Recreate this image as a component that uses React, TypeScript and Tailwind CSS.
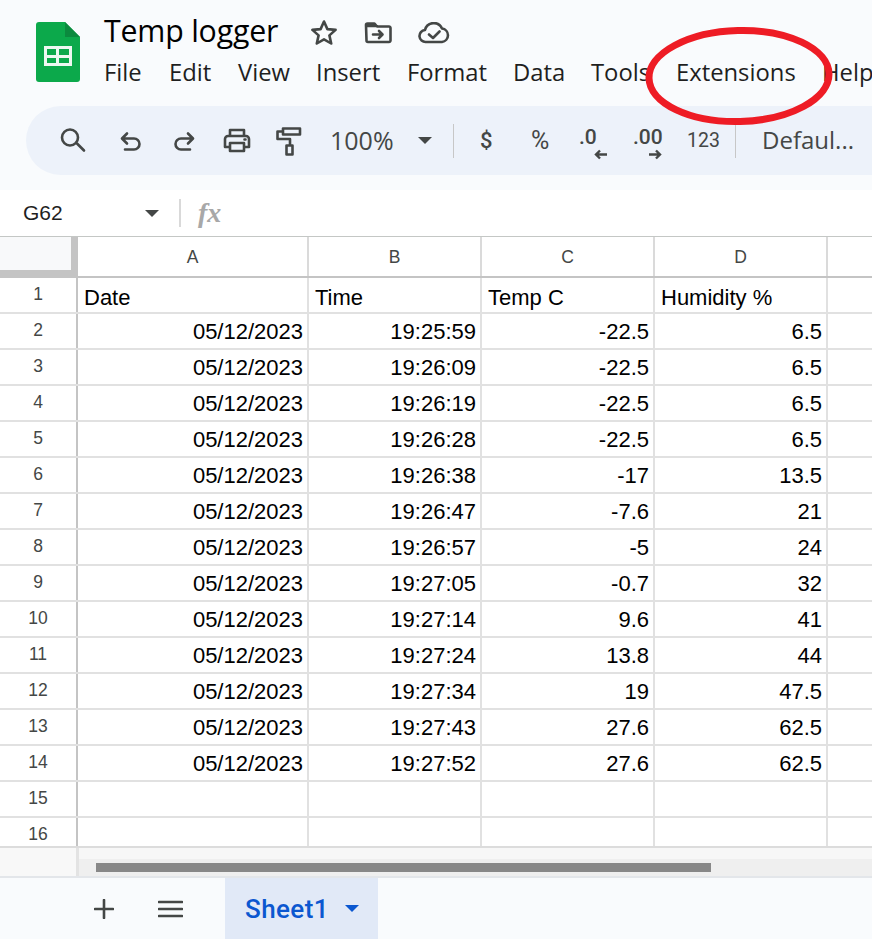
const rows = [
  ["05/12/2023", "19:25:59", "-22.5", "6.5"],
  ["05/12/2023", "19:26:09", "-22.5", "6.5"],
  ["05/12/2023", "19:26:19", "-22.5", "6.5"],
  ["05/12/2023", "19:26:28", "-22.5", "6.5"],
  ["05/12/2023", "19:26:38", "-17", "13.5"],
  ["05/12/2023", "19:26:47", "-7.6", "21"],
  ["05/12/2023", "19:26:57", "-5", "24"],
  ["05/12/2023", "19:27:05", "-0.7", "32"],
  ["05/12/2023", "19:27:14", "9.6", "41"],
  ["05/12/2023", "19:27:24", "13.8", "44"],
  ["05/12/2023", "19:27:34", "19", "47.5"],
  ["05/12/2023", "19:27:43", "27.6", "62.5"],
  ["05/12/2023", "19:27:52", "27.6", "62.5"],
];

const menu = [
  { label: "File", className: "w-[65px]" },
  { label: "Edit", className: "w-[69px]" },
  { label: "View", className: "w-[78px]" },
  { label: "Insert", className: "w-[91px]" },
  { label: "Format", className: "w-[106px]" },
  { label: "Data", className: "w-[78px]" },
  { label: "Tools", className: "w-[85px]" },
  { label: "Extensions", className: "w-[146px]" },
  { label: "Help", className: "w-[60px]" },
];

const SheetsLogo = () => (
  <svg width="44" height="60" viewBox="0 0 44 60" className="shrink-0">
    <path d="M3 0H29L44 15V57a3 3 0 0 1-3 3H3a3 3 0 0 1-3-3V3a3 3 0 0 1 3-3Z" fill="#0ca94b" />
    <path d="M29 0L44 15H29Z" fill="#0b8a3e" />
    <path d="M8 24H36V44H8ZM11 27V33H20V27ZM23 27V33H33V27ZM11 36V41H20V36ZM23 36V41H33V36Z" fill="#eef8f1" fillRule="evenodd" />
  </svg>
);

const Stroke = ({ w, h, d, sw = 2.6 }: { w: number; h: number; d: string; sw?: number }) => (
  <svg width={w} height={h} viewBox={`0 0 ${w} ${h}`} fill="none" stroke="#444746" strokeWidth={sw} strokeLinejoin="round" strokeLinecap="round" className="shrink-0">
    <path d={d} />
  </svg>
);

const Caret = ({ color = "#444746" }: { color?: string }) => (
  <svg width="14" height="7" viewBox="0 0 14 7" className="shrink-0">
    <path d="M0 0H14L7 7Z" fill={color} />
  </svg>
);

const Arrow = ({ dir }: { dir: "left" | "right" }) => (
  <svg width="14" height="11" viewBox="0 0 14 11" className="absolute bottom-[-3px] right-0">
    <path
      d={dir === "left" ? "M13 5.500H2M6 1.500L2 5.500l4 4" : "M1 5.500H12M8 1.500l4 4l-4 4"}
      fill="none"
      stroke="#444746"
      strokeWidth="2.400"
    />
  </svg>
);

export default function App() {
  return (
    <div className="relative flex h-[939px] w-[872px] flex-col overflow-hidden bg-white font-['Liberation_Sans',sans-serif] text-black">
      {/* Title + menus */}
      <div className="flex h-[190px] shrink-0 flex-col bg-[#f9fbfd]">
        <div className="flex h-[106px] pl-[36px] pt-[22px]">
          <SheetsLogo />
          <div className="ml-[24px] -mt-[22px] flex flex-col font-['Open_Sans',sans-serif]">
            <div className="flex h-[58px] items-center">
              <span className="w-[206px] pt-[3px] text-[30.300px] tracking-[-0.2px] text-black">Temp logger</span>
              <div className="flex items-center pt-[5px]">
                <Stroke w={28} h={26} d="M14 2.500l3.400 7.600 8.200.8-6.200 5.500 1.800 8.100-7.200-4.200-7.200 4.200 1.800-8.100-6.200-5.500 8.200-.8Z" />
                <span className="relative ml-[26px] pt-[2px]">
                  <Stroke w={28} h={22} d="M2 3a1.500 1.500 0 0 1 1.500-1.500h7l2.500 3h12a1.500 1.500 0 0 1 1.500 1.500v12.500a1.500 1.500 0 0 1-1.500 1.500h-21a1.500 1.500 0 0 1-1.500-1.500ZM2 4h11M9 12.500h9M15 9l3.500 3.500-3.500 3.500" />
                </span>
                <span className="ml-[26px] pt-[2px]">
                  <Stroke w={32} h={22} d="M8 20a6 6 0 0 1-1-12a9 9 0 0 1 17-1.500a6.800 6.800 0 0 1 0 13.500ZM11 12.500l4 3.500l6.500-6.500" />
                </span>
              </div>
            </div>
            <div className="flex h-[30px] w-[800px] items-center text-[23.800px] text-[#1f1f1f]">
              {menu.map((item) => (
                <span key={item.label} className={`${item.className} shrink-0`}>
                  {item.label}
                </span>
              ))}
            </div>
          </div>
        </div>
        {/* Toolbar */}
        <div className="ml-[26px] flex h-[69px] w-[880px] items-center rounded-l-[35px] bg-[#edf2fa] pl-[34px] text-[#444746]">
          <span className="-mt-[2px]"><Stroke w={26} h={26} d="M10 2.500a8 8 0 1 1 0 16a8 8 0 0 1 0-16ZM16 15.500l8 8" /></span>
          <span className="ml-[33px]"><Stroke w={24} h={22} d="M8 3.500L3 8.500l5 5M3.500 8.500H15a5.500 5.500 0 0 1 0 11H6" /></span>
          <span className="ml-[29px]"><Stroke w={24} h={22} d="M16 3.500l5 5l-5 5M20.500 8.500H9a5.500 5.500 0 0 0 0 11h9" /></span>
          <span className="ml-[27px]"><Stroke w={28} h={26} d="M7 8V2h14v6M7 19H2v-8a3 3 0 0 1 3-3h18a3 3 0 0 1 3 3v8h-5M7 15h14v8H7ZM21.500 11.500h1" /></span>
          <span className="ml-[25px]"><Stroke w={26} h={30} d="M7 2.500h17v6H7ZM7 5.500H1.500v7.500H14v6M10.500 19.500h6v9h-6Z" /></span>
          <span className="ml-[28px] w-[88px] font-['Open_Sans',sans-serif] text-[25px]">100%</span>
          <Caret />
          <span className="ml-[21px] h-[34px] w-px bg-[#c7c7c7]" />
          <span className="ml-[26px] w-[14px] font-['Roboto',sans-serif] text-[22px] font-medium">$</span>
          <span className="ml-[37px] w-[19px] font-['Roboto',sans-serif] text-[25px]">%</span>
          <span className="relative ml-[29px] h-[32px] w-[29px] font-['Roboto',sans-serif] text-[21px] font-medium leading-[24px]">
            .0
            <Arrow dir="left" />
          </span>
          <span className="relative ml-[25px] h-[32px] w-[29px] font-['Roboto',sans-serif] text-[21px] font-medium leading-[24px]">
            .00
            <Arrow dir="right" />
          </span>
          <span className="ml-[25px] w-[31px] font-['Roboto',sans-serif] text-[19.500px]">123</span>
          <span className="ml-[17px] h-[34px] w-px bg-[#c7c7c7]" />
          <span className="ml-[26px] -mt-[2px] font-['Open_Sans',sans-serif] text-[24px]">Defaul...</span>
        </div>
      </div>

      {/* Name box + formula bar */}
      <div className="flex h-[47px] shrink-0 items-center border-b border-[#c4c7c5] bg-white">
        <span className="ml-[23px] w-[122px] text-[21px] text-[#1f1f1f]">G62</span>
        <Caret />
        <span className="ml-[20px] h-[28px] w-[2px] bg-[#d9d9d9]" />
        <span className="ml-[17px] font-['Liberation_Serif',serif] text-[28px] font-bold italic text-[#a8a8a8]">fx</span>
      </div>

      {/* Grid */}
      <div className="flex h-[41px] shrink-0 border-b-2 border-[#c4c4c4]">
        <div className="w-[78px] shrink-0 bg-[#c4c4c4] pb-[6px] pr-[7px]">
          <div className="h-full bg-[#f8f9fa]" />
        </div>
        <div className="flex w-[231px] shrink-0 items-center justify-center border-r-2 border-[#dadada] pt-[2px] text-[17.500px] text-[#444746]">A</div>
        <div className="flex w-[173px] shrink-0 items-center justify-center border-r-2 border-[#dadada] pt-[2px] text-[17.500px] text-[#444746]">B</div>
        <div className="flex w-[173px] shrink-0 items-center justify-center border-r-2 border-[#dadada] pt-[2px] text-[17.500px] text-[#444746]">C</div>
        <div className="flex w-[173px] shrink-0 items-center justify-center border-r-2 border-[#dadada] pt-[2px] text-[17.500px] text-[#444746]">D</div>
      </div>
      <GridRow n={1} cells={["Date", "Time", "Temp C", "Humidity %"]} left />
      {rows.map((r, i) => (
        <GridRow key={i} n={i + 2} cells={r} />
      ))}
      <GridRow n={15} cells={["", "", "", ""]} />
      <div className="flex h-[30px] shrink-0 border-b-2 border-[#dcdcdc]">
        <div className="flex w-[78px] shrink-0 justify-center border-r-2 border-[#c4c4c4] pt-[3px] text-[17.500px] text-[#444746]">16</div>
        <div className="w-[231px] shrink-0 border-r-2 border-[#e1e1e1]" />
        <div className="w-[173px] shrink-0 border-r-2 border-[#e1e1e1]" />
        <div className="w-[173px] shrink-0 border-r-2 border-[#e1e1e1]" />
        <div className="w-[173px] shrink-0 border-r-2 border-[#e1e1e1]" />
      </div>

      {/* Scrollbar */}
      <div className="flex h-[30px] shrink-0 border-b-2 border-[#e3e6ea] bg-[#f7f7f7]">
        <div className="w-[79px] shrink-0 border-r-[3px] border-[#e3e3e3] bg-[#f8f8f8]" />
        <div className="flex flex-1 flex-col justify-end">
          <div className="flex h-[17px] items-center bg-[#efefef] pl-[17px]">
            <div className="h-[9px] w-[615px] bg-[#888888]" />
          </div>
        </div>
      </div>

      {/* Sheet tabs */}
      <div className="flex flex-1 items-center bg-[#f9fbfd]">
        <span className="ml-[94px]">
          <Stroke w={20} h={20} d="M10 1v18M1 10h18" />
        </span>
        <span className="ml-[44px]">
          <Stroke w={25} h={18} d="M1 2h23M1 9h23M1 16h23" />
        </span>
        <div className="ml-[42px] flex h-full w-[153px] items-center bg-[#e1e9f7] pl-[20px] font-['Roboto',sans-serif] text-[26px] font-medium tracking-[0.4px] text-[#0b57d0]">
          <span className="w-[100px] pt-[2px]">Sheet1</span>
          <Caret color="#0b57d0" />
        </div>
      </div>

      {/* Red hand-drawn annotation */}
      <svg width="200" height="110" viewBox="0 0 200 110" className="pointer-events-none absolute left-[639px] top-[21px]">
        <ellipse cx="100" cy="55" rx="90" ry="45.500" transform="rotate(-1.500 100 55)" fill="none" stroke="#ee1c25" strokeWidth="7" />
      </svg>
    </div>
  );
}

function GridRow({ n, cells, left }: { n: number; cells: string[]; left?: boolean }) {
  const align = left ? "justify-start pl-[6px] -mb-[2px]" : "justify-end pr-[4px]";
  return (
    <div className="flex h-[36px] shrink-0 border-b-2 border-[#e1e1e1]">
      <div className="flex w-[78px] shrink-0 justify-center border-r-2 border-[#c4c4c4] pt-[3px] text-[17.500px] text-[#444746]">{n}</div>
      <div className={`flex w-[231px] shrink-0 items-end border-r-2 border-[#e1e1e1] text-[22px] ${align}`}>{cells[0]}</div>
      <div className={`flex w-[173px] shrink-0 items-end border-r-2 border-[#e1e1e1] text-[22px] ${align}`}>{cells[1]}</div>
      <div className={`flex w-[173px] shrink-0 items-end border-r-2 border-[#e1e1e1] text-[22px] ${align}`}>{cells[2]}</div>
      <div className={`flex w-[173px] shrink-0 items-end border-r-2 border-[#e1e1e1] text-[22px] ${align}`}>{cells[3]}</div>
    </div>
  );
}
